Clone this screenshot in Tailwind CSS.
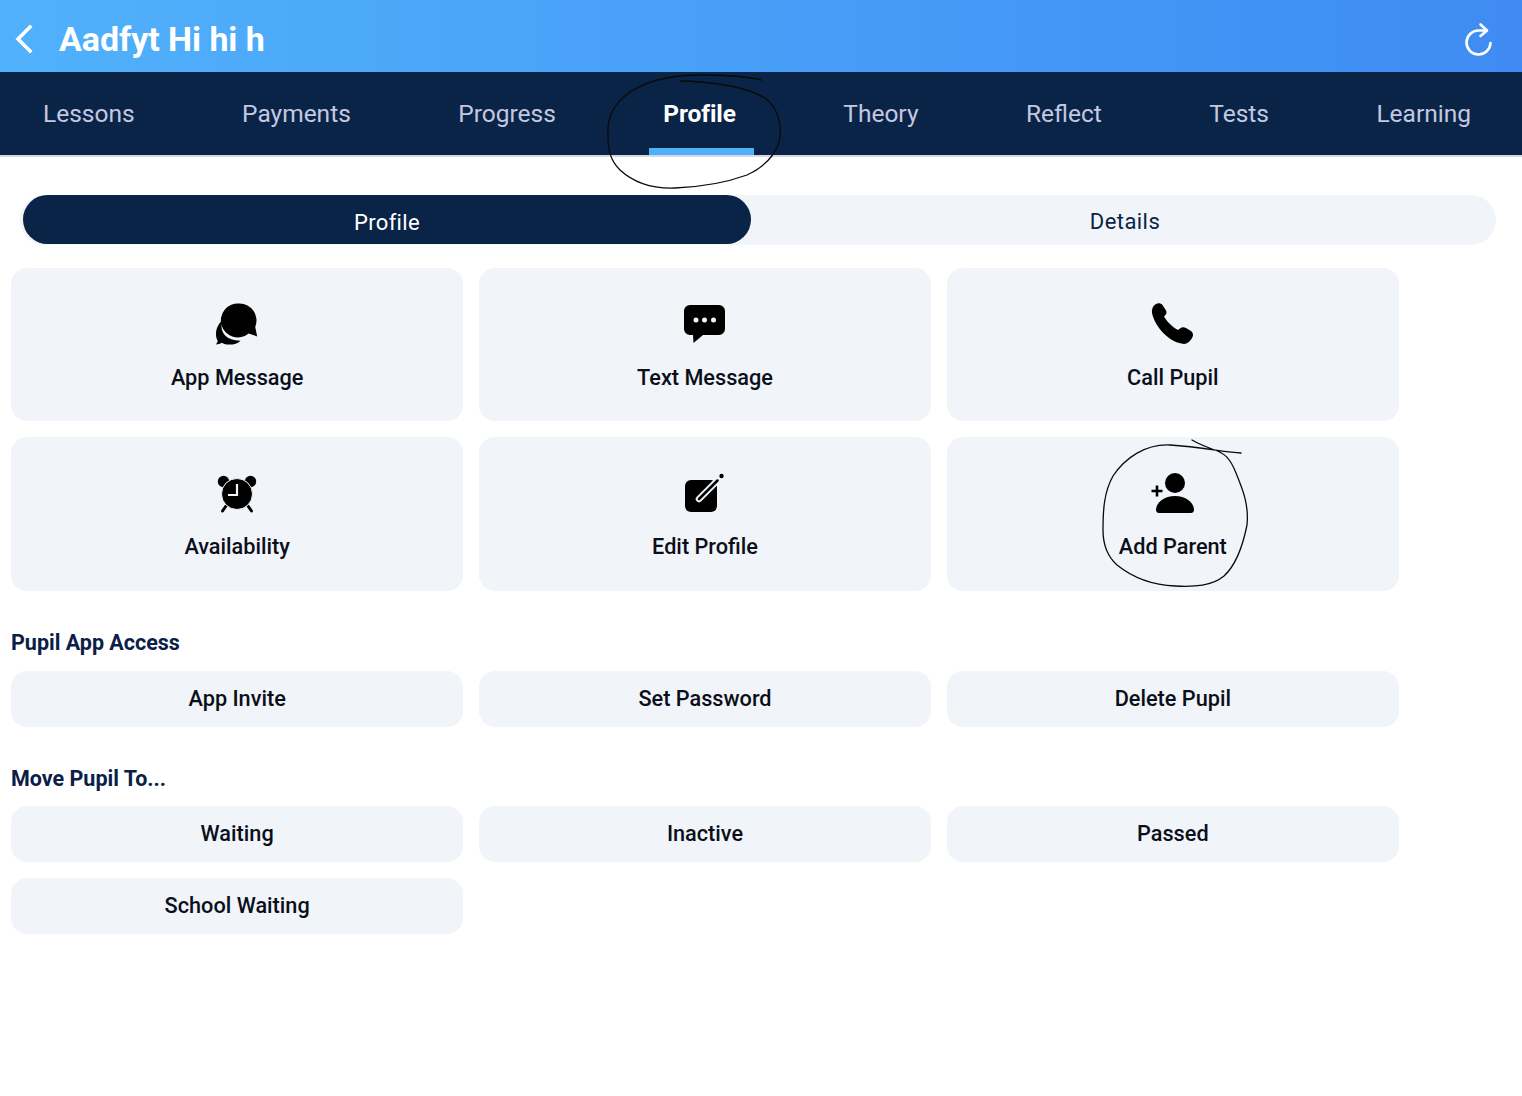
<!DOCTYPE html>
<html>
<head>
<meta charset="utf-8">
<script src="https://cdn.jsdelivr.net/npm/@tailwindcss/browser@4"></script>
</head>
<body class="relative h-[1096px] w-[1522px] overflow-hidden bg-white font-['Roboto',sans-serif]">
<header class="flex h-[72px] items-center justify-between bg-gradient-to-r from-[#51b1fb] to-[#3f8bf3] pl-[14px] pr-[27px] pt-[6px]">
  <div class="flex items-center gap-[25px]">
    <svg width="20" height="32" viewBox="0 0 20 32" fill="none" stroke="white" stroke-width="3.6" stroke-linecap="square"><path d="M16 4 4 16l12 12"/></svg>
    <h1 class="text-[34px] font-bold leading-none tracking-[-0.05px] text-white">Aadfyt Hi hi h</h1>
  </div>
  <svg width="30" height="34" viewBox="0 0 30 34" fill="none" stroke="white" stroke-width="2.6" stroke-linecap="round" stroke-linejoin="round"><path d="M25.5 21a12 12 0 1 1-12-12.5h8"/><path d="M15.5 2.5 22 8.5l-6.5 5.5"/></svg>
</header>
<nav class="flex h-[85px] items-start justify-between border-b-2 border-[#d5d8e2] bg-[#0a2447] pl-[43px] pr-[51px] pt-[25px] text-[24.5px] leading-[34px] text-[#c3c9e0]">
  <a>Lessons</a><a>Payments</a><a>Progress</a>
  <a class="relative font-bold tracking-[-0.1px] text-white">Profile<span class="absolute left-[-14px] top-[51px] h-[7px] w-[105px] bg-[#4fb0fa]"></span></a>
  <a>Theory</a><a>Reflect</a><a>Tests</a><a>Learning</a>
</nav>
<main class="px-[11px]">
  <div class="ml-[9px] mt-[38px] flex h-[50px] w-[1476px] rounded-full bg-[#f1f4f9] pl-[3px] text-[22px] tracking-[0.3px]">
    <div class="flex h-[49px] w-[728px] items-center justify-center rounded-full bg-[#0a2447] pt-[5px] text-white">Profile</div>
    <div class="flex flex-1 items-center justify-center pl-[3px] pt-[3px] tracking-[0.45px] text-[#0a2447]">Details</div>
  </div>
  <div class="mt-[23px] grid w-[1388px] grid-cols-3 gap-x-[15.5px] gap-y-4 text-[21.700px] font-medium text-[#0b0f1a]">
    <div class="flex h-[153px] flex-col items-center rounded-2xl bg-[#f1f4f9] pt-[31px]">
      <svg width="48" height="48" viewBox="0 0 48 48"><path d="M9.500 21.500C6 24 3 29 3 35c0 3 .8 5.500 1.800 7-.6 1.300-1.300 2.600-1.800 3.600 2-.1 4-.8 5.700-1.800 2 1.300 4.800 1.800 7.500 1.800 5 0 8.800-1.400 11.300-3.900-9-.1-16-3-18.500-10.700-.8-3-.7-6 .5-9.500z"/><path d="M26.500 4.500a17 17 0 0 1 15.700 23.500l2 9.500-8.500-3a17 17 0 1 1-9.200-30z"/></svg>
      <span class="mt-[16px] leading-[30px]">App Message</span>
    </div>
    <div class="flex h-[153px] flex-col items-center rounded-2xl bg-[#f1f4f9] pt-[31px]">
      <svg width="48" height="48" viewBox="0 0 48 48"><path d="M9 6h29a6 6 0 0 1 6 6v18a6 6 0 0 1-6 6H22l-9.500 8-.5-8H9a6 6 0 0 1-6-6V12a6 6 0 0 1 6-6z"/><circle cx="15" cy="21" r="2.500" fill="#f1f4f9"/><circle cx="23.500" cy="21" r="2.500" fill="#f1f4f9"/><circle cx="32.500" cy="21" r="2.500" fill="#f1f4f9"/></svg>
      <span class="mt-[16px] leading-[30px]">Text Message</span>
    </div>
    <div class="flex h-[153px] flex-col items-center rounded-2xl bg-[#f1f4f9] pt-[31px]">
      <svg width="48" height="48" viewBox="0 0 48 48" class="ml-[-1px]"><path d="M8 5c2-1.500 5-1 6.500 1l3.500 5.500c1 2 .5 3.500-1 5l-1 1c2.500 4.500 8 10.500 14 13.500l2-1.500c2-1.500 4-1.500 6-.5l5 3c2 1.500 2.500 4 1.500 6-1.500 3.500-4.500 6.500-8.500 7-10-1-20-8-27-19C5 19 3.500 14 4 11c.5-3 2-5 4-6z"/></svg>
      <span class="mt-[16px] leading-[30px]">Call Pupil</span>
    </div>
    <div class="flex h-[154px] flex-col items-center rounded-2xl bg-[#f1f4f9] pt-[31px]">
      <svg width="48" height="48" viewBox="0 0 48 48"><circle cx="10.500" cy="13.500" r="5.700"/><circle cx="37.500" cy="13.500" r="5.700"/><path d="M13 38l-3.500 5M35 38l3.500 5" stroke="black" stroke-width="3" stroke-linecap="round"/><circle cx="24" cy="26" r="15.500" stroke="#f1f4f9" stroke-width="1"/><path d="M24 16v11h-9" fill="none" stroke="#f1f4f9" stroke-width="2.200"/></svg>
      <span class="mt-[16px] leading-[30px]">Availability</span>
    </div>
    <div class="flex h-[154px] flex-col items-center rounded-2xl bg-[#f1f4f9] pt-[31px]">
      <svg width="48" height="48" viewBox="0 0 48 48"><rect x="4" y="12" width="32" height="32" rx="6"/><path d="M18 31 38 11" stroke="#f1f4f9" stroke-width="6.500" stroke-linecap="round"/><path d="M18 31 36.500 12.500" stroke="black" stroke-width="2.500" stroke-linecap="round"/><circle cx="40.500" cy="8" r="2.200"/></svg>
      <span class="mt-[16px] leading-[30px]">Edit Profile</span>
    </div>
    <div class="flex h-[154px] flex-col items-center rounded-2xl bg-[#f1f4f9] pt-[31px]">
      <svg width="48" height="48" viewBox="0 0 48 48" class="ml-[-1px]"><circle cx="27" cy="15" r="10"/><path d="M8 42c0-8 9-14 19-14s19 6 19 14c0 2-1.500 3-3 3H11c-1.500 0-3-1-3-3z"/><path d="M9 17.500v11M3.500 23h11" stroke="black" stroke-width="2.600"/></svg>
      <span class="mt-[16px] leading-[30px]">Add Parent</span>
    </div>
  </div>
  <h2 class="mt-[37px] text-[21.500px] font-bold leading-[30px] text-[#0a2049]">Pupil App Access</h2>
  <div class="mt-[13px] grid w-[1388px] grid-cols-3 gap-x-[15.5px] gap-y-4 text-[21.700px] font-medium text-[#0b0f1a]">
    <div class="flex h-[56px] items-center justify-center rounded-2xl bg-[#f1f4f9]">App Invite</div>
    <div class="flex h-[56px] items-center justify-center rounded-2xl bg-[#f1f4f9]">Set Password</div>
    <div class="flex h-[56px] items-center justify-center rounded-2xl bg-[#f1f4f9]">Delete Pupil</div>
  </div>
  <h2 class="mt-[37px] text-[21.500px] font-bold leading-[30px] text-[#0a2049]">Move Pupil To...</h2>
  <div class="mt-[12px] grid w-[1388px] grid-cols-3 gap-x-[15.5px] gap-y-4 text-[21.700px] font-medium text-[#0b0f1a]">
    <div class="flex h-[56px] items-center justify-center rounded-2xl bg-[#f1f4f9]">Waiting</div>
    <div class="flex h-[56px] items-center justify-center rounded-2xl bg-[#f1f4f9]">Inactive</div>
    <div class="flex h-[56px] items-center justify-center rounded-2xl bg-[#f1f4f9]">Passed</div>
    <div class="flex h-[56px] items-center justify-center rounded-2xl bg-[#f1f4f9]">School Waiting</div>
  </div>
</main>
<svg class="pointer-events-none absolute left-0 top-0" width="1522" height="1096" fill="none" stroke="#0a0a0a" stroke-width="1.300" stroke-linecap="round" stroke-linejoin="round">
  <path d="M761 80C745 76 725 75 700 75C675 75 650 79 630 92C615 103 607 115 608 135C608 150 610 160 620 170C632 181 650 189 675 188C700 187 725 183 747 175C762 168 774 158 779 142C783 125 778 108 765 98C748 88 725 84 700 82C690 81 685 81 680 81"/>
  <path d="M1241 453C1225 452 1200 447 1170 445C1145 444 1125 458 1113 476C1104 492 1103 510 1103 530C1103 545 1107 556 1117 565C1132 577 1150 585 1175 586C1195 587 1212 586 1224 576C1236 565 1243 545 1247 525C1249 505 1243 490 1236 473C1230 458 1225 453 1212 449C1204 446 1197 443 1192 440"/>
</svg>
</body>
</html>
